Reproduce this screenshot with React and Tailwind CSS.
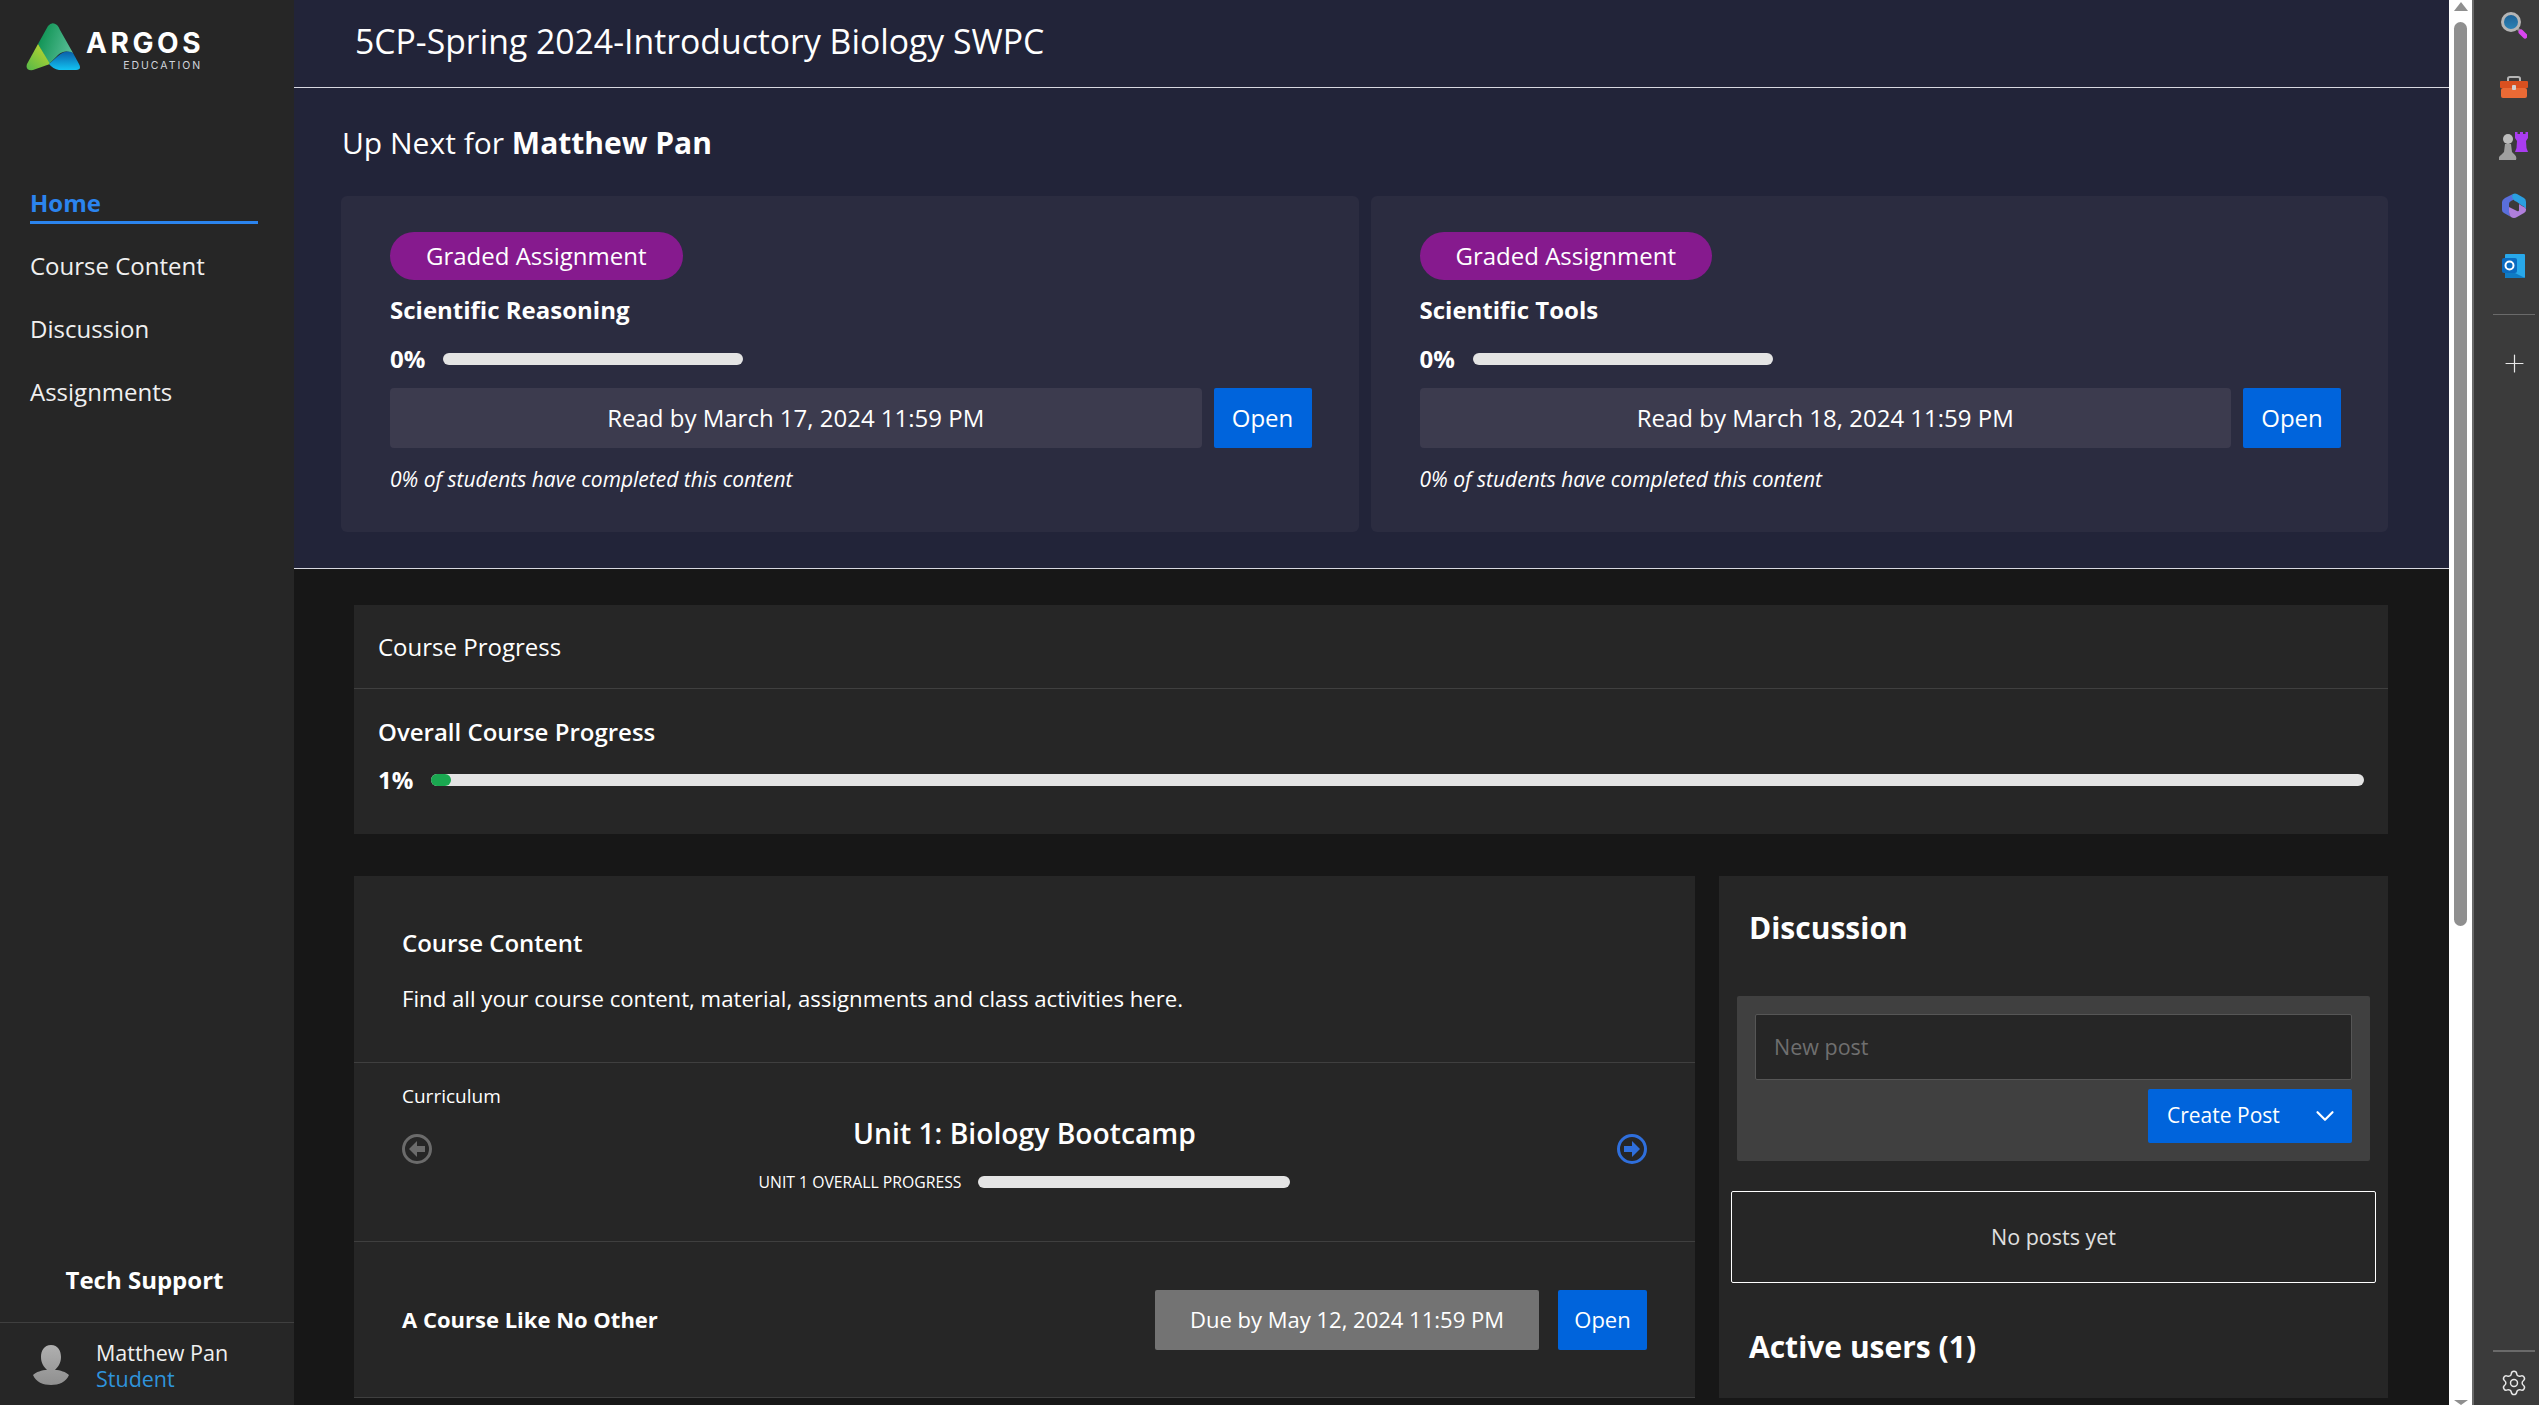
import { ChevronDown, Plus, Settings } from 'lucide-react';

function Logo() {
    return (
        <div className="flex h-[87px] shrink-0 items-start pl-[26px] pt-[22px]">
            <svg width="55" height="49" viewBox="0 0 55 49" className="shrink-0">
                <defs>
                    <linearGradient id="lgTop" x1="0" y1="0.3" x2="1" y2="0.7">
                        <stop offset="0" stopColor="#0b9150" />
                        <stop offset="1" stopColor="#5cc09a" />
                    </linearGradient>
                    <linearGradient id="lgLeft" x1="0.8" y1="0" x2="0" y2="1">
                        <stop offset="0" stopColor="#bcd62f" />
                        <stop offset="1" stopColor="#55b848" />
                    </linearGradient>
                    <linearGradient id="lgBlue" x1="0" y1="0" x2="0" y2="1">
                        <stop offset="0" stopColor="#0a5fa8" />
                        <stop offset="1" stopColor="#12c3f2" />
                    </linearGradient>
                </defs>
                <path d="M12 22 L22 4 Q26 -1 31 3 Q33 5 34 8 L47 31 Q38 27 32 33 L23 42 Z" fill="url(#lgTop)" />
                <path d="M12 22 L24 42 L7 48 Q-1 49 1 42 Z" fill="url(#lgLeft)" />
                <path d="M23 42 L32 34 Q40 27 47 31 L53 42 Q56 48 50 48 L33 48 Q27 47 23 42 Z" fill="url(#lgBlue)" />
            </svg>
            <div className="ml-[5px] flex flex-col items-end font-['Inter',sans-serif] text-white">
                <span className="mt-[6px] mr-[-4px] text-[28px] leading-[30px] font-bold tracking-[3.6px]">ARGOS</span>
                <span className="mt-[2px] mr-[-2px] text-[10.5px] leading-[12px] tracking-[2px] text-gray-300">EDUCATION</span>
            </div>
        </div>
    );
}

function Sidebar() {
    return (
        <aside className="flex h-full w-[294px] shrink-0 flex-col bg-[#262626] text-white">
            <Logo />
            <nav className="mt-[99px] flex flex-1 flex-col pl-[30px] text-[24px] leading-[33px]">
                <div className="w-[228px] border-b-[3px] border-[#2b84ee] pb-[2px] font-bold text-[#2b84ee]">Home</div>
                <div className="mt-[25px] text-[#f0f0f0]">Course Content</div>
                <div className="mt-[30px] text-[#f0f0f0]">Discussion</div>
                <div className="mt-[30px] text-[#f0f0f0]">Assignments</div>
            </nav>
            <div className="h-[59px] pr-[5px] text-center text-[24px] leading-[33px] font-bold">
                Tech Support
            </div>
            <div className="flex h-[83px] items-start border-t border-[#3f3f3f] pl-[33px] pt-[17px]">
                <svg width="37" height="42" viewBox="0 0 37 42" className="mt-[5px] shrink-0">
                    <defs>
                        <linearGradient id="avatarFill" x1="0" y1="0" x2="0" y2="1">
                            <stop offset="0" stopColor="#b0b0b0" />
                            <stop offset="1" stopColor="#8f8f8f" />
                        </linearGradient>
                    </defs>
                    <path d="M18 0 C25 0 28 6 28 12 C28 18 25 22 22 25 C27 25 33 27 36 30 C33 37 26 40 18 40 C10 40 3 37 0 30 C3 27 9 25 14 25 C11 22 8 18 8 12 C8 6 11 0 18 0 Z" fill="url(#avatarFill)" />
                </svg>
                <div className="ml-[26px] text-[21.5px] leading-[26px]">
                    <div className="text-[#f0f0f0]">Matthew Pan</div>
                    <div className="text-[#2f94dc]">Student</div>
                </div>
            </div>
        </aside>
    );
}

function UpNextCard({ title, date }) {
    return (
        <div className="h-[336px] flex-1 rounded-[6px] bg-[#2b2c40] pl-[49px] pr-[47px] pt-[36px] text-white">
            <span className="inline-block h-[48px] rounded-full bg-[#861a8e] px-[36px] text-[24px] leading-[47px]">
                Graded Assignment
            </span>
            <div className="mt-[13px] text-[24px] leading-[33px] font-bold">{title}</div>
            <div className="mt-[16px] flex h-[33px] items-center">
                <span className="w-[53px] text-[24px] font-bold">0%</span>
                <div className="h-[12px] w-[300px] rounded-full bg-[#e4e4e4]" />
            </div>
            <div className="mt-[13px] flex gap-[12px]">
                <div className="flex h-[60px] flex-1 items-center justify-center rounded-[4px] bg-[#3c3b4e] text-[24px]">
                    Read by {date}
                </div>
                <button className="h-[60px] w-[98px] rounded-[2px] bg-[#0064dc] text-[24px]">Open</button>
            </div>
            <p className="mt-[16px] text-[21px] leading-[30px] italic">0% of students have completed this content</p>
        </div>
    );
}

function CircleArrow({ color, flip }) {
    return (
        <svg width="30" height="30" viewBox="0 0 30 30" className={flip ? 'mb-[4px] rotate-180' : 'mb-[4px]'}>
            <circle cx="15" cy="15" r="13.5" fill="none" stroke={color} strokeWidth="3" />
            <path d="M7 15 L15 7 L15 12 L23 12 L23 18 L15 18 L15 23 Z" fill={color} />
        </svg>
    );
}

function CourseContent() {
    return (
        <section className="w-[1341px] shrink-0 bg-[#262626] text-white">
            <div className="h-[186px] pl-[48px] pt-[50px]">
                <h2 className="text-[24px] leading-[33px] font-semibold">Course Content</h2>
                <p className="mt-[25px] text-[22.2px] leading-[30px]">
                    Find all your course content, material, assignments and class activities here.
                </p>
            </div>
            <div className="flex h-[179px] flex-col border-t border-[#3f3f3f] px-[48px] pt-[20px]">
                <div className="text-[19px] leading-[26px]">Curriculum</div>
                <div className="flex items-center justify-between">
                    <CircleArrow color="#6b6b6b" />
                    <div className="flex flex-col items-center">
                        <div className="mt-[5px] text-[28.25px] leading-[38px] font-semibold">Unit 1: Biology Bootcamp</div>
                        <div className="mt-[19px] flex items-center">
                            <span className="text-[15.75px] leading-[22px]">UNIT 1 OVERALL PROGRESS</span>
                            <div className="ml-[17px] h-[12px] w-[312px] rounded-full bg-[#e4e4e4]" />
                        </div>
                    </div>
                    <CircleArrow color="#2f6fdc" flip />
                </div>
            </div>
            <div className="flex h-[157px] items-center justify-between border-t border-b border-[#3f3f3f] pl-[48px] pr-[48px]">
                <div className="text-[22px] font-bold">A Course Like No Other</div>
                <div className="flex gap-[19px]">
                    <div className="flex h-[60px] w-[384px] items-center justify-center rounded-[2px] bg-[#737373] text-[22px]">
                        Due by May 12, 2024 11:59 PM
                    </div>
                    <button className="h-[60px] w-[89px] rounded-[2px] bg-[#0064dc] text-[22px]">Open</button>
                </div>
            </div>
        </section>
    );
}

function Discussion() {
    return (
        <section className="flex-1 bg-[#262626] pt-[33px] text-white">
            <h2 className="pl-[30px] text-[30px] leading-[38px] font-bold">Discussion</h2>
            <div className="mx-[18px] mt-[49px] h-[165px] rounded-[2px] bg-[#404040] px-[18px] pt-[18px]">
                <div className="flex h-[66px] items-center rounded-[2px] border border-[#565656] bg-[#262626] pl-[18px] text-[21.5px] text-[#6f6f6f]">
                    New post
                </div>
                <div className="mt-[9px] flex justify-end">
                    <button className="flex h-[54px] w-[204px] items-center justify-between rounded-[2px] bg-[#0064dc] pl-[19px] pr-[12px] text-[21px]">
                        Create Post
                        <ChevronDown size={30} strokeWidth={1.75} />
                    </button>
                </div>
            </div>
            <div className="mx-[12px] mt-[30px] flex h-[92px] items-center justify-center rounded-[2px] border border-white text-[21.5px] text-[#e0e0e0]">
                No posts yet
            </div>
            <h2 className="mt-[45px] pl-[30px] text-[30px] leading-[38px] font-bold">Active users (1)</h2>
        </section>
    );
}

function RailIcons() {
    return (
        <div className="flex flex-col items-center">
            <svg width="26" height="28" viewBox="0 0 26 28" className="mt-[12px]">
                <defs>
                    <linearGradient id="lens" x1="0" y1="0" x2="0" y2="1">
                        <stop offset="0" stopColor="#1c5f94" />
                        <stop offset="1" stopColor="#2d86b8" />
                    </linearGradient>
                </defs>
                <path d="M16 16 L20 20" stroke="#8a8a8a" strokeWidth="2.5" />
                <circle cx="10" cy="10" r="8.5" fill="url(#lens)" stroke="#b5b5b5" strokeWidth="3" />
                <path d="M20 20 L24 24" stroke="#d946ef" strokeWidth="5" strokeLinecap="round" />
            </svg>
            <svg width="28" height="22" viewBox="0 0 28 22" className="mt-[36px]">
                <path d="M8 6 V2.5 Q8 1 10 1 H18 Q20 1 20 2.5 V6" fill="none" stroke="#b5b5b5" strokeWidth="2" />
                <rect x="0" y="5" width="28" height="7" rx="1" fill="#d9501f" />
                <rect x="1" y="12" width="26" height="10" rx="2" fill="#ea6a35" />
                <rect x="12" y="9" width="4" height="5" rx="1" fill="#d0d0d0" />
            </svg>
            <svg width="30" height="28" viewBox="0 0 30 28" className="mt-[34px]">
                <path d="M16 0 H18.5 V2 H21 V0 H24 V2 H26.5 V0 H29 V6 L27 9 L27.5 16 L29 20 H16 L17.5 16 L18 9 L16 6 Z" fill="#a93cf0" />
                <circle cx="9" cy="7" r="5" fill="#bcbcbc" />
                <path d="M6 12 H12 L13 20 L16 23 Q18 25 17 28 H0 Q-1 25 2 23 L5 20 Z" fill="#a0a0a0" />
            </svg>
            <svg width="24" height="26" viewBox="0 0 24 26" className="mt-[33px]">
                <path d="M11 1 L3 5 Q0 7 0 9 V17 Q0 19 2 20 L9 24 Q7 22 7 18 V11 Q7 9 9 8 L13 6 Q9 4 11 1 Z" fill="#5a6fdc" />
                <path d="M11 1 Q13 0 15 1 L22 5 Q24 6 24 9 V16 Q22 13 19 12 L15 9 Q12 8 11 6 Q9 3 11 1 Z" fill="#2a9fe0" />
                <path d="M7 14 L15 18 Q17 19 17 17 V11 L20 13 Q23 14 24 16 V17 Q24 19 22 20 L15 24 Q12 26 9 24 Q7 22 7 19 Z" fill="#b07fdc" />
            </svg>
            <svg width="24" height="24" viewBox="0 0 24 24" className="mt-[35px]">
                <rect x="3" y="0" width="20" height="24" rx="1" fill="#28a8ea" />
                <path d="M3 14 L23 24 H4 Q3 24 3 23 Z" fill="#0f7bc4" />
                <rect x="0" y="4" width="15" height="15" rx="2" fill="#0b6bc0" />
                <circle cx="7.5" cy="11.5" r="4" fill="none" stroke="#fff" strokeWidth="2" />
            </svg>
            <div className="mt-[36px] h-px w-[42px] bg-[#6a6a6a]" />
            <Plus size={29} strokeWidth={1} className="mt-[34px] text-[#e8e8e8]" />
        </div>
    );
}

function Rail() {
    return (
        <div className="flex h-full w-[65px] shrink-0 flex-col justify-between bg-[#3b3b3b] pl-[19px] pr-[4px]">
            <RailIcons />
            <div className="flex flex-col items-center pb-[8px]">
                <div className="h-[2px] w-[42px] bg-[#6a6a6a]" />
                <Settings size={28} strokeWidth={1.25} className="mt-[17px] text-[#e8e8e8]" />
            </div>
        </div>
    );
}

function Scrollbar() {
    return (
        <div className="flex h-full w-[25px] shrink-0 border-r-2 border-[#6a6a6a] bg-white">
            <div className="flex w-[23px] flex-col items-center">
                <div className="mt-[2px] h-0 w-0 border-x-[7px] border-b-[9px] border-x-transparent border-b-[#8f8f8f]" />
                <div className="mt-[11px] h-[904px] w-[13px] rounded-full bg-[#8f8f8f]" />
                <div className="mt-auto h-0 w-0 border-x-[7px] border-t-[5px] border-x-transparent border-t-[#8f8f8f]" />
            </div>
        </div>
    );
}

export default function App() {
    return (
        <div className="flex h-[1405px] w-[2539px] overflow-hidden bg-[#171717] font-['Open_Sans',sans-serif]">
            <Sidebar />
            <main className="w-[2155px] shrink-0 overflow-hidden">
                <header className="flex h-[88px] items-center border-b border-[#d8d8e0] bg-[#222439] pb-[4px] pl-[61px] text-[33.75px] text-white">
                    5CP-Spring 2024-Introductory Biology SWPC
                </header>
                <section className="border-b border-[#d8d8e0] bg-[#222439] px-[47px] pr-[61px] pb-[36px] text-white">
                    <h1 className="flex h-[108px] items-center pl-[1px] text-[30px]">
                        <span>Up Next for&nbsp;</span><b className="font-bold">Matthew Pan</b>
                    </h1>
                    <div className="flex gap-[12px]">
                        <UpNextCard title="Scientific Reasoning" date="March 17, 2024 11:59 PM" />
                        <UpNextCard title="Scientific Tools" date="March 18, 2024 11:59 PM" />
                    </div>
                </section>
                <div className="px-[60px] pr-[61px] pt-[36px]">
                    <section className="h-[229px] bg-[#262626] text-white">
                        <div className="flex h-[84px] items-center border-b border-[#3f3f3f] pl-[24px] text-[24px]">Course Progress</div>
                        <div className="pl-[24px] pr-[24px] pt-[26px]">
                            <div className="text-[24px] leading-[33px] font-semibold">Overall Course Progress</div>
                            <div className="mt-[15px] flex h-[33px] items-center">
                                <span className="w-[53px] text-[24px] font-bold">1%</span>
                                <div className="h-[12px] flex-1 rounded-full bg-[#e4e4e4]">
                                    <div className="h-[12px] w-[20px] rounded-full bg-[#1aa850]" />
                                </div>
                            </div>
                        </div>
                    </section>
                    <div className="mt-[42px] flex gap-[24px]">
                        <CourseContent />
                        <Discussion />
                    </div>
                </div>
            </main>
            <Scrollbar />
            <Rail />
        </div>
    );
}
